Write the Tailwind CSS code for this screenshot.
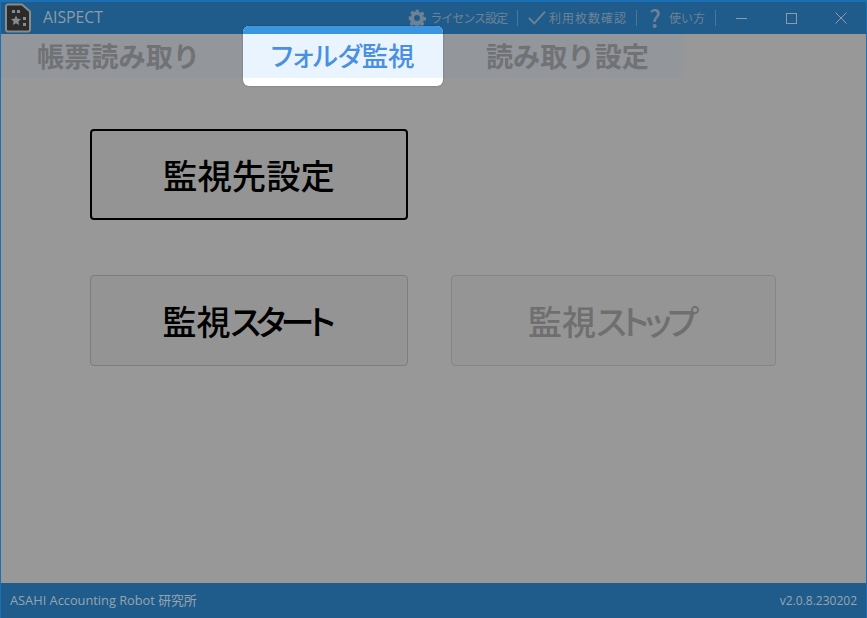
<!DOCTYPE html>
<html lang="ja">
<head>
  <meta charset="UTF-8" />
  <title>AISPECT</title>
  <script src="https://cdn.jsdelivr.net/npm/@tailwindcss/browser@4"></script>
</head>
<body class="overflow-hidden">
  <div class="w-[867px] h-[618px] flex flex-col bg-[#989898] border-x border-[#1b6fb5] font-['Noto_Sans_CJK_JP','Noto_Sans',sans-serif]">

    <!-- title bar -->
    <div class="h-[34px] shrink-0 flex items-center bg-[#1f5c8b] border-t-2 border-[#1b6fb5] text-[#8f9ba6]">
      <svg class="ml-[4px] w-[27px] h-[30px]" viewBox="0 0 27 30">
        <path d="M3 1.500h14l8 7v18a2 2 0 0 1-2 2H3a2 2 0 0 1-2-2v-23a2 2 0 0 1 2-2z" fill="#2b2b2b" stroke="#8a8a8a" stroke-width="2"/>
        <rect x="7" y="7" width="3" height="3" fill="#8a8a8a"/>
        <rect x="12" y="7" width="3" height="3" fill="#8a8a8a"/>
        <path d="M11 12.500l1.500 3.200 3.500.400-2.600 2.400.7 3.500-3.100-1.800-3.100 1.800.7-3.500-2.600-2.400 3.500-.400z" fill="#8a8a8a"/>
        <rect x="18" y="14" width="3" height="3" fill="#8a8a8a"/>
        <rect x="18" y="20" width="3" height="3" fill="#8a8a8a"/>
      </svg>
      <span class="ml-[11px] text-[15.800px] font-['Open_Sans'] leading-none">AISPECT</span>

      <div class="ml-auto flex items-center h-[20px] text-[12px] text-[#6f8294]">
        <svg class="w-[18px] h-[18px]" viewBox="0 0 24 24" fill="#6f8294">
          <path fill-rule="evenodd" d="M10 1h4l.6 3.100 1.800.8 2.700-1.700 2.800 2.800-1.800 2.600.8 1.900 3.100.5v4l-3.100.6-.8 1.800 1.700 2.700-2.800 2.800-2.600-1.800-1.800.8-.6 3.100h-4l-.6-3.100-1.800-.8-2.700 1.800-2.800-2.800 1.700-2.700-.8-1.800L1 14v-4l3.100-.5.800-1.900-1.800-2.600 2.800-2.800 2.700 1.700 1.800-.8zM12 8a4 4 0 1 0 0 8 4 4 0 0 0 0-8z"/>
        </svg>
        <span class="ml-[4px] tracking-[-1px]">ライセンス設定</span>
        <div class="w-px h-[16px] bg-[#4d7796] ml-[10px]"></div>
        <svg class="ml-[10px] w-[18px] h-[16px]" viewBox="0 0 20 16" fill="none" stroke="#6f8294" stroke-width="2">
          <path d="M1 8l6 6L19 1"/>
        </svg>
        <span class="ml-[3px] tracking-[1px]">利用枚数確認</span>
        <div class="w-px h-[16px] bg-[#4d7796] ml-[9px]"></div>
        <span class="ml-[12px] w-[14px] text-[24px] font-medium leading-none">?</span>
        <span class="ml-[6px]">使い方</span>
        <div class="w-px h-[16px] bg-[#4d7796] ml-[10px]"></div>
      </div>

      <div class="flex items-center text-[#8f9ba6]">
        <div class="w-[50px] flex justify-center"><div class="w-[11px] h-px bg-[#8f9ba6]"></div></div>
        <div class="w-[50px] flex justify-center"><div class="w-[11px] h-[11px] border border-[#8f9ba6]"></div></div>
        <div class="w-[50px] flex justify-center">
          <svg class="w-[12px] h-[12px]" viewBox="0 0 12 12" stroke="#8f9ba6"><path d="M.5.500l11 11M11.500.500l-11 11"/></svg>
        </div>
      </div>
    </div>

    <!-- tabs -->
    <div class="h-[44px] w-[683px] shrink-0 flex pl-[5px] bg-[#93979b] text-[27.200px] font-bold text-[#707275]">
      <div class="w-[225px] pb-[2px] flex items-center justify-center">帳票読み取り</div>
      <div class="w-[225px] flex justify-center">
        <div class="relative z-10 -mt-[8px] -ml-[2px] w-[200px] h-[60px] rounded-[6px] overflow-hidden flex flex-col bg-white shadow-[0_0_2px_rgba(0,0,0,0.3)]">
          <div class="h-[8px] bg-[#3a96e0]"></div>
          <div class="h-[44px] pb-[2px] flex items-center justify-center bg-[#eaf4ff] text-[#4a90e2] text-[26.500px] font-medium tracking-[-0.2px] [font-feature-settings:'palt']">フォルダ監視</div>
        </div>
      </div>
      <div class="w-[225px] pb-[2px] pr-[2px] flex items-center justify-center">読み取り設定</div>
    </div>

    <!-- buttons -->
    <div class="flex-1 pl-[89px] pt-[51px]">
      <div class="w-[318px] h-[91px] flex items-center justify-center rounded-[4px] border-2 border-black bg-[#949494] text-[34.400px] font-medium text-black">監視先設定</div>
      <div class="flex gap-[43px] mt-[55px]">
        <div class="w-[318px] h-[91px] flex items-center justify-center rounded-[4px] border border-[#7d7d7d] bg-[#949494] text-[34px] font-medium text-black [font-feature-settings:'palt']">監視<span class="tracking-[-5px] pr-[5px]">スタート</span></div>
        <div class="w-[325px] h-[91px] flex items-center justify-center rounded-[4px] border border-[#858585] bg-[#959595] text-[34px] font-medium text-[#6f6f6f] [font-feature-settings:'palt']">監視<span class="tracking-[-4px] pr-[4px]">ストップ</span></div>
      </div>
    </div>

    <!-- status bar -->
    <div class="h-[35px] shrink-0 flex items-center justify-between pl-[9px] pr-[9px] bg-[#1f5c8b] text-[12.800px] text-[#98a4ae] font-['Open_Sans','Noto_Sans_CJK_JP',sans-serif]">
      <span>ASAHI Accounting Robot 研究所</span>
      <span class="text-[12px]">v2.0.8.230202</span>
    </div>
  </div>
</body>
</html>
